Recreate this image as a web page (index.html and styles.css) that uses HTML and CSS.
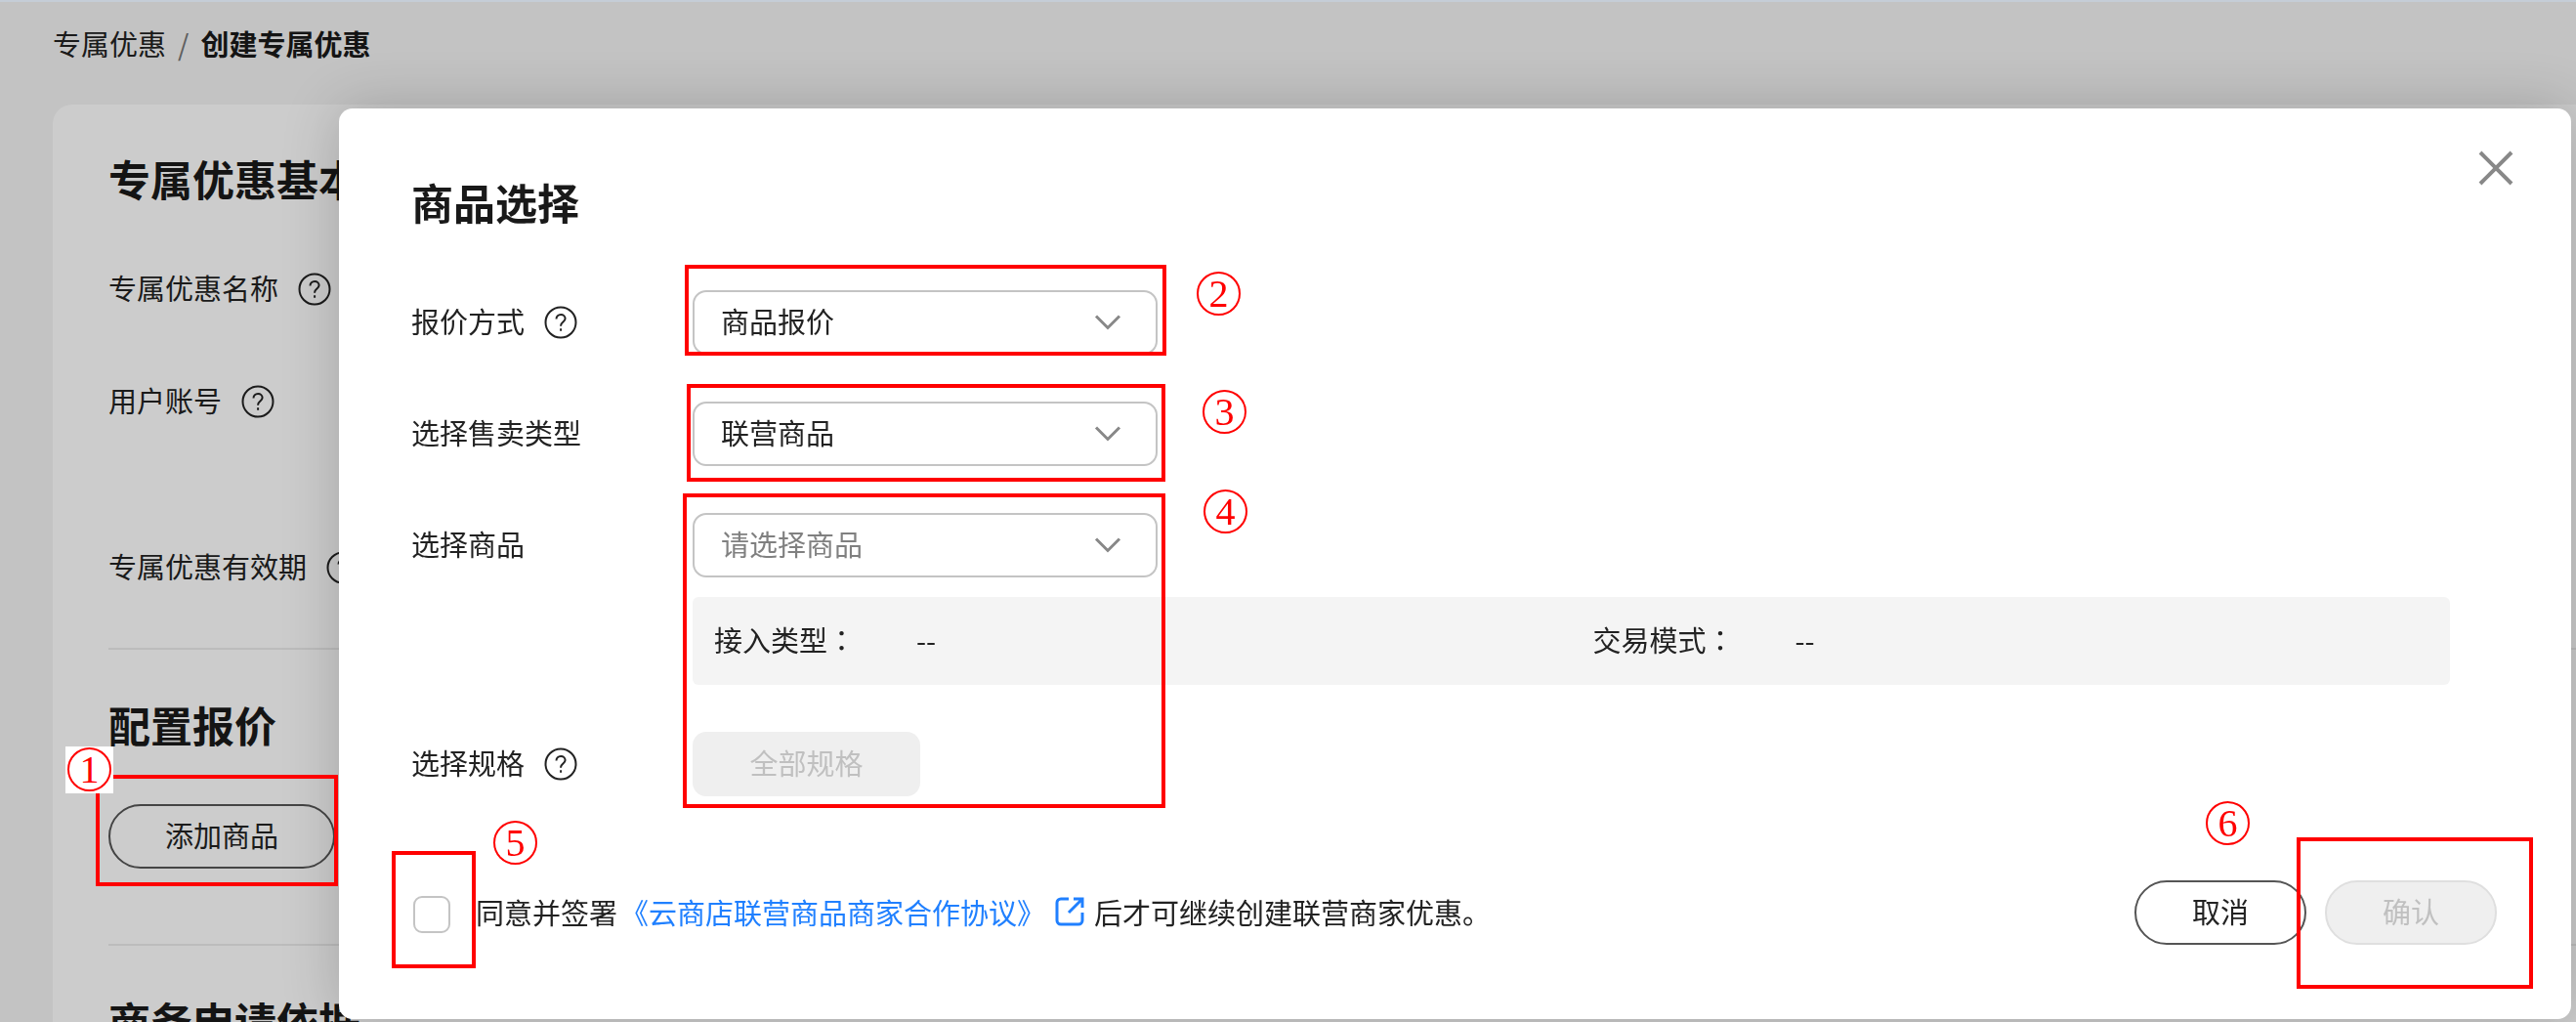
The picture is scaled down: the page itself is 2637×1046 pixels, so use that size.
FILE: index.html
```
<!DOCTYPE html>
<html lang="zh-CN">
<head>
  <meta charset="UTF-8">
  <meta name="viewport" content="width=device-width, initial-scale=1.0">
  <title>创建专属优惠</title>
  <link rel="stylesheet" href="styles.css">
</head>
<body>
  <svg class="sprite" aria-hidden="true">
    <symbol id="icon-help" viewBox="0 0 34 34">
      <circle cx="17" cy="17" r="15.5"/>
      <path d="M12.5 13.5c0-2.700 2-4.500 4.600-4.500s4.500 1.700 4.500 4.100c0 3.400-4.500 3.500-4.500 7.200v.4M17.100 23.200v2.600"/>
    </symbol>
    <symbol id="icon-arrow" viewBox="0 0 28 18">
      <path d="M2 2.500l12 12 12-12"/>
    </symbol>
  </svg>

  <div class="page">
    <nav class="breadcrumb">
      <a href="#">专属优惠</a>
      <span class="slash">/</span>
      <strong>创建专属优惠</strong>
    </nav>

    <div class="card">
      <section class="card-section">
        <h2>专属优惠基本信息</h2>
        <div class="info-row"><span>专属优惠名称</span> <svg class="help"><use href="#icon-help"/></svg></div>
        <div class="info-row account"><span>用户账号</span> <svg class="help"><use href="#icon-help"/></svg></div>
        <div class="info-row"><span>专属优惠有效期</span> <svg class="help"><use href="#icon-help"/></svg></div>
      </section>
      <section class="card-section price">
        <h2>配置报价</h2>
        <button type="button" class="btn btn-add">添加商品</button>
      </section>
      <section class="card-section">
        <h2>商务申请依据</h2>
      </section>
    </div>
  </div>

  <div class="backdrop"></div>

  <div class="modal" role="dialog" aria-labelledby="modal-title">
    <button type="button" class="close" aria-label="关闭">
      <svg viewBox="0 0 36 36"><path d="M2 2l32 32M34 2L2 34"/></svg>
    </button>
    <h2 id="modal-title">商品选择</h2>

    <form>
      <div class="form-row">
        <label for="quote"><span>报价方式</span> <svg class="help"><use href="#icon-help"/></svg></label>
        <div class="select">
          <select id="quote"><option>商品报价</option></select>
          <svg class="arrow"><use href="#icon-arrow"/></svg>
        </div>
      </div>
      <div class="form-row">
        <label for="sale-type"><span>选择售卖类型</span></label>
        <div class="select">
          <select id="sale-type"><option>联营商品</option></select>
          <svg class="arrow"><use href="#icon-arrow"/></svg>
        </div>
      </div>
      <div class="form-row">
        <label for="product"><span>选择商品</span></label>
        <div class="field">
          <div class="select">
            <select id="product" class="empty"><option>请选择商品</option></select>
            <svg class="arrow"><use href="#icon-arrow"/></svg>
          </div>
          <dl class="summary">
            <div><dt>接入类型<span lang="zh-TW">：</span></dt><dd>--</dd></div>
            <div><dt>交易模式<span lang="zh-TW">：</span></dt><dd>--</dd></div>
          </dl>
        </div>
      </div>
      <div class="form-row">
        <label for="spec"><span>选择规格</span> <svg class="help"><use href="#icon-help"/></svg></label>
        <button type="button" id="spec" class="btn-spec" disabled>全部规格</button>
      </div>

      <div class="modal-footer">
        <div class="agree">
          <input type="checkbox" id="agree">
          <label for="agree">同意并签署</label>
          <a href="#">《云商店联营商品商家合作协议》
            <svg class="external" viewBox="0 0 30 30"><path d="M14 2H6a4 4 0 0 0-4 4v18a4 4 0 0 0 4 4h18a4 4 0 0 0 4-4v-8M19 2h9v9M28 2L14 16"/></svg>
          </a>
          <span>后才可继续创建联营商家优惠。</span>
        </div>
        <div class="actions">
          <button type="button" class="btn">取消</button>
          <button type="submit" class="btn" disabled>确认</button>
        </div>
      </div>
    </form>

    <div class="mark mark-2"></div>
    <div class="mark mark-3"></div>
    <div class="mark mark-4"></div>
    <div class="mark mark-5"></div>
    <div class="mark mark-6"></div>
    <span class="num num-2">2</span>
    <span class="num num-3">3</span>
    <span class="num num-4">4</span>
    <span class="num num-5">5</span>
    <span class="num num-6">6</span>
  </div>

  <div class="mark mark-1"></div>
  <div class="num-bg"><span class="num">1</span></div>
</body>
</html>
```
FILE: styles.css
```
* {
  box-sizing: border-box;
  margin: 0;
  padding: 0;
}
body {
  font-family: "Noto Sans CJK SC", sans-serif;
  font-size: 29px;
  line-height: 34px;
  color: #222;
  background: #f4f4f4;
}
button,
select {
  font: inherit;
  color: inherit;
}
a {
  color: inherit;
  text-decoration: none;
}
h2 {
  font-size: 43px;
  line-height: 54px;
  color: #191919;
}
.sprite {
  position: absolute;
  width: 0;
  height: 0;
}
svg {
  fill: none;
  stroke: currentColor;
}
.help {
  width: 34px;
  height: 34px;
  stroke-width: 2;
}

/* page behind the dialog */
.page {
  height: 100vh;
  overflow: hidden;
  padding: 27px 0 0 54px;
}
.breadcrumb {
  display: flex;
  gap: 12px;
  margin-bottom: 46px;
}
.breadcrumb strong {
  color: #191919;
}
.slash {
  color: #777;
}
.card {
  padding: 48px 0 0 57px;
  background: #fff;
  border-radius: 20px 0 0 0;
}
.card-section {
  margin-bottom: 49px;
}
.card-section + .card-section {
  padding-top: 49px;
  border-top: 2px solid #ececec;
}
.info-row {
  display: flex;
  gap: 20px;
  height: 34px;
  margin: 70px 0 81px;
}
.info-row span {
  line-height: 30px;
}
.info-row + .info-row {
  margin-top: 0;
}
.info-row.account {
  margin-bottom: 136px;
}
.info-row:last-child {
  margin-bottom: 65px;
}
.card-section:first-child {
  margin-bottom: 0;
}
.price {
  padding-bottom: 28px;
}
.btn {
  width: 176px;
  height: 66px;
  padding-bottom: 4px;
  background: none;
  border: 2px solid #555;
  border-radius: 33px;
}
.btn-add {
  display: block;
  width: 232px;
  margin-top: 55px;
}
.backdrop {
  position: fixed;
  inset: 0;
  background: rgba(0, 0, 0, 0.2);
  border-top: 2px solid #c5cdd7;
}

/* dialog */
.modal {
  position: absolute;
  top: 111px;
  left: 347px;
  right: 5px;
  padding: 68px 76px 76px 74px;
  background: #fff;
  border-radius: 14px;
  box-shadow: 0 0 60px rgba(0, 0, 0, 0.2);
}
.modal h2 {
  margin-bottom: 64px;
}
.close {
  position: absolute;
  top: 43px;
  right: 59px;
  width: 36px;
  height: 36px;
  background: none;
  border: none;
  color: #888;
}
.close svg {
  display: block;
  stroke-width: 4;
}
.form-row {
  display: grid;
  grid-template-columns: 288px 1fr;
  margin: 0 48px 48px 0;
}
.form-row > label {
  display: flex;
  align-items: center;
  gap: 20px;
  height: 66px;
}
.form-row label span {
  padding-bottom: 4px;
}
.select {
  position: relative;
  width: 476px;
}
.select select {
  display: block;
  width: 100%;
  height: 66px;
  padding: 0 70px 4px 27px;
  appearance: none;
  background: #fff;
  border: 2px solid #c4c4c4;
  border-radius: 14px;
}
.select .empty {
  color: #808080;
}
.arrow {
  position: absolute;
  top: 24px;
  right: 37px;
  width: 28px;
  height: 18px;
  color: #888;
  stroke-width: 3;
  pointer-events: none;
}
.summary {
  display: grid;
  grid-template-columns: 1fr 1fr;
  margin-top: 20px;
  background: #f4f4f4;
  border-radius: 6px;
}
.summary div {
  display: flex;
  align-items: center;
  height: 90px;
  padding: 0 0 4px 22px;
}
.summary dt {
  width: 207px;
}
.summary span {
  font-family: "Noto Sans CJK TC", sans-serif;
}
.btn-spec {
  width: 233px;
  height: 66px;
  padding-bottom: 4px;
  background: #efefef;
  border: none;
  border-radius: 14px;
}
button:disabled {
  color: #c0c0c0;
}
.modal-footer {
  display: flex;
  justify-content: space-between;
  margin-top: 86px;
}
.agree {
  display: flex;
  align-items: center;
  padding-bottom: 3px;
}
.agree input {
  width: 38px;
  height: 38px;
  margin: 6px 26px 0 2px;
  appearance: none;
  border: 2px solid #c4c4c4;
  border-radius: 9px;
}
.agree a {
  display: flex;
  align-items: center;
  gap: 10px;
  margin: 0 10px 0 3px;
  color: #2080ff;
}
.external {
  width: 30px;
  height: 30px;
  stroke-width: 3;
}
.actions {
  display: flex;
  gap: 19px;
}
.actions .btn:disabled {
  background: #efefef;
  border-color: #dfdfdf;
}

/* red step marks */
.mark {
  position: absolute;
  border: 4px solid #f00;
  pointer-events: none;
}
.num {
  display: block;
  width: 45px;
  height: 45px;
  border: 2px solid #f00;
  border-radius: 50%;
  color: #f00;
  font-family: "Liberation Serif", serif;
  font-size: 40px;
  line-height: 41px;
  text-align: center;
}
.modal .num {
  position: absolute;
}
.num-bg {
  position: absolute;
  top: 764px;
  left: 67px;
  padding: 1px 2px 2px;
  background: #fff;
}
.mark-1 {
  top: 793px;
  left: 98px;
  width: 248px;
  height: 114px;
}
.mark-2 {
  top: 160px;
  left: 354px;
  width: 493px;
  height: 93px;
}
.mark-3 {
  top: 282px;
  left: 356px;
  width: 490px;
  height: 100px;
}
.mark-4 {
  top: 394px;
  left: 352px;
  width: 494px;
  height: 322px;
}
.mark-5 {
  top: 760px;
  left: 54px;
  width: 86px;
  height: 120px;
}
.mark-6 {
  top: 746px;
  right: 39px;
  width: 242px;
  height: 155px;
}
.num-2 {
  top: 167px;
  left: 878px;
}
.num-3 {
  top: 288px;
  left: 884px;
}
.num-4 {
  top: 390px;
  left: 885px;
}
.num-5 {
  top: 729px;
  left: 158px;
}
.num-6 {
  top: 709px;
  right: 329px;
}
```
